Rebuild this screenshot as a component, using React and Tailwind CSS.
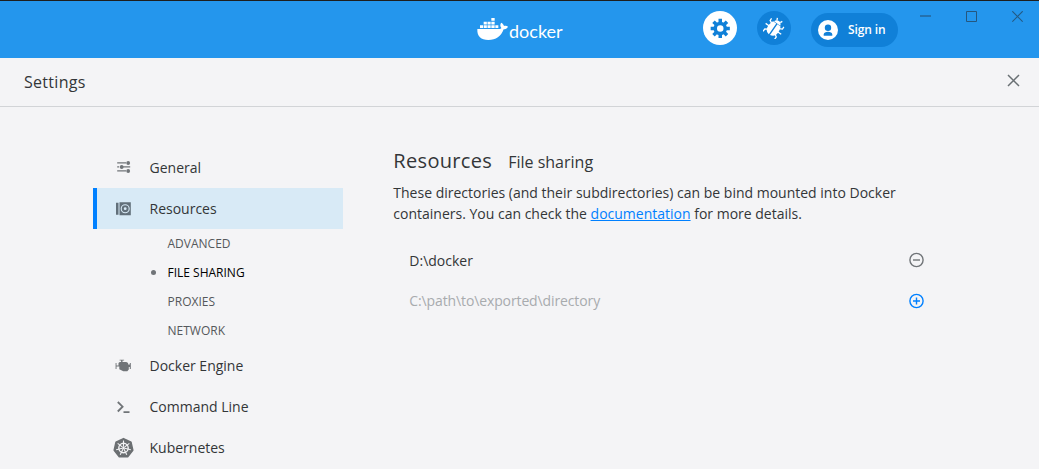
import React from "react";

function Whale() {
  return (
    <svg className="block h-6 w-8 shrink-0 fill-white" viewBox="50 51 96 72">
      <path d="M93 54h10v8.500h-10zM70 65h9.500v8.500h-9.500zM81.500 65h9.500v8.500h-9.500zM93 65h10v8.500h-10zM59 75.500h9v8.500h-9zM70 75.500h9.500v8.500h-9.500zM81.500 75.500h9.500v8.500h-9.500zM93 75.500h10v8.500h-10zM105 75.500h9v8.500h-9z" />
      <path d="M51 87H115C120 87 122 86 123 84C119 79 119 73 122.500 68C127 70 130 74 131 78C135 77 140 77 143 80C140 86 135 88 130 88C122 110 107 120 84 120C62 120 50 110 51 87Z" />
    </svg>
  );
}

function Gear() {
  return (
    <svg className="size-5" viewBox="0 0 24 24">
      <circle cx="12.300" cy="12.500" r="6" fill="none" stroke="#1080d8" strokeWidth="4.200" />
      <path stroke="#1080d8" strokeWidth="4.200" d="M12.300 1v4.500M12.300 19.500V24M.8 12.500h4.500M19.300 12.500h4.500M4.200 4.400l3.200 3.200M17.200 17.400l3.200 3.200M20.400 4.400l-3.200 3.200M7.400 17.400l-3.200 3.200" />
    </svg>
  );
}

function Bug() {
  return (
    <svg className="size-[22px]" viewBox="0 0 22 22" fill="none">
      <g transform="rotate(35 11 11)">
        <path fill="#fff" d="M7.200 5.500C7.800 3.300 9.200 2.500 11 2.500S14.200 3.300 14.800 5.500zM10.300 6v13C7.200 18.500 5 16.500 5 13c0-2.600.5-5.300 1.500-7zM11.700 6v13c3.100-.5 5.300-2.500 5.300-6 0-2.600-.5-5.300-1.500-7z" />
        <path stroke="#fff" strokeWidth="1.300" d="M6.500 8.500L3.500 7V4.500M6 12H1.500M6.500 15.500L4 17v3M15.500 8.500l3-1.500V4.500M16 12h4.500M15.500 15.500L18 17v3M9 3L8 .8M13 3l1-2.200" />
      </g>
    </svg>
  );
}

function Person() {
  return (
    <svg className="size-5 shrink-0" viewBox="0 0 20 20">
      <circle cx="10" cy="10" r="10" fill="#fff" />
      <circle cx="10" cy="7.700" r="3.200" fill="#1080d8" />
      <path fill="#1080d8" d="M5.700 15.800v-1.300c0-2 2-2.800 4.300-2.800s4.300.8 4.300 2.800v1.300z" />
    </svg>
  );
}

function Sliders() {
  return (
    <svg className="size-4 fill-[#707478]" viewBox="-0.7 0 16 16">
      <path d="M1.500 2.300h9v1.300h-9zM7 6.300h7.500v1.300H7zM1.500 6.300h2v1.300h-2zM1.500 10.300h9v1.300h-9z" />
      <circle cx="12.500" cy="3" r="1.900" /><circle cx="6" cy="7" r="1.900" /><circle cx="12.500" cy="11" r="1.900" />
    </svg>
  );
}

function Drive() {
  return (
    <svg className="size-4" viewBox="-0.5 0 16 16">
      <path fill="#62707a" d="M.5 1.800h2.500v12H.5zM4 1.300h11.300v13H4z" />
      <circle cx="9.700" cy="7.700" r="4" fill="none" stroke="#d8eaf6" strokeWidth="1.100" />
      <circle cx="9.700" cy="7.700" r="1.400" fill="#d8eaf6" />
    </svg>
  );
}

function Engine() {
  return (
    <svg className="size-4 fill-[#707478]" viewBox="-0.3 0 16 16">
      <path d="M4.300 1.800h4.500v.8H7.200V4H11l1.800 1v1.500h1.700V5h1v6h-1V9h-1v2.500L12 13.300H8L4 11.300V8.500H1.200V11h-.9V5h.9v2.500H3.200V5L4.500 4h1.300V2.600H4.300z" />
    </svg>
  );
}

function Prompt() {
  return (
    <svg className="size-4" viewBox="-0.5 0 16 16" fill="none" stroke="#707478" strokeWidth="1.800">
      <path d="M2.300 3L7.100 7.700l-4.800 4.800M8 13.200h6" />
    </svg>
  );
}

function Helm() {
  const spokes = [0, 1, 2, 3, 4, 5, 6];
  return (
    <svg className="size-[22px] shrink-0" viewBox="-0.5 0 22 22">
      <path fill="#6b6f72" stroke="#6b6f72" strokeWidth="1.500" strokeLinejoin="round" d="M11 1.600L18.500 5.200L20.300 13.200L15.200 19.800H6.800L1.700 13.200L3.500 5.200Z" />
      <circle cx="11" cy="11" r="4.700" fill="none" stroke="#f4f4f6" strokeWidth="1.400" />
      {spokes.map((n) => (
        <path key={n} d="M11 9.700V3.500" stroke="#f4f4f6" strokeWidth="1.100" transform={`rotate(${(n * 360) / 7} 11 11)`} />
      ))}
      <circle cx="11" cy="11" r="1.300" fill="#f4f4f6" />
    </svg>
  );
}

function NavItem({ icon, label, active }) {
  return (
    <a className={`flex h-[41px] items-center border-l-4 text-[14px] ${active ? "border-[#0080ff] bg-[#d8eaf6]" : "border-transparent"}`}>
      <span className="ml-[15px] flex w-[22px] shrink-0 justify-center">{icon}</span>
      <span className="ml-[15.500px]">{label}</span>
    </a>
  );
}

function SubItem({ label, active }) {
  return (
    <a className={`flex h-[29px] items-center pl-[58px] text-[12px] ${active ? "text-black" : "text-[#55585b]"}`}>
      <span className={`mr-[11.500px] size-[5px] rounded-full ${active ? "bg-[#707478]" : ""}`} />
      {label}
    </a>
  );
}

function CircleAction({ add }) {
  return (
    <svg className={`size-4 ${add ? "mt-px stroke-[#0080ff]" : "stroke-[#707478]"}`} viewBox="0 0 16 16" fill="none" strokeWidth="1.400">
      <circle cx="8.500" cy="8" r="6.600" />
      <path d={add ? "M5 8h7M8.500 4.500v7" : "M5 8h7"} />
    </svg>
  );
}

export default function App() {
  return (
    <div className="flex h-[469px] w-[1039px] flex-col overflow-hidden bg-[#f4f4f6] font-['Open_Sans',sans-serif] text-[#333638]">
      <div className="h-px shrink-0 bg-[#1e1e1e]" />
      <header className="flex h-[57px] shrink-0 bg-[#2496ed]">
        <div className="flex h-full w-[703px] items-start pl-[477px] pt-4">
          <Whale />
          <span className="mt-[3px] font-['Lato',sans-serif] text-[18px] leading-[22px] text-white">docker</span>
        </div>
        <div className="flex items-start pt-[10px] text-white">
          <span className="flex size-[34px] items-center justify-center rounded-full bg-white"><Gear /></span>
          <span className="ml-5 flex size-[34px] items-center justify-center rounded-full bg-[#1080d8]"><Bug /></span>
          <span className="ml-5 mt-[2px] flex h-[34px] w-[87px] items-center rounded-full bg-[#1080d8] pl-[7px] text-[12px] font-semibold">
            <Person />
            <span className="ml-[10px] whitespace-nowrap tracking-[-0.1px]">Sign in</span>
          </span>
        </div>
        <div className="ml-auto flex gap-[35px] pr-4 pt-[10px]">
          <svg className="h-3 w-[11px]" viewBox="0 0 11 12" stroke="#2471ae" strokeWidth="2"><path d="M0 5h11" /></svg>
          <svg className="h-3 w-[11px]" viewBox="0 0 11 12" fill="none" stroke="#24577f"><path d="M.5.5h10v10H.5z" /></svg>
          <svg className="h-3 w-[11px]" viewBox="0 0 11 12" stroke="#245a84" strokeWidth="1.200"><path d="M.3.3l10.400 10.400M10.700.3L.3 10.700" /></svg>
        </div>
      </header>
      <div className="flex h-[49px] shrink-0 items-center justify-between border-b border-[#d2d4d7] pl-6 pr-5">
        <h1 className="text-[16px] font-medium tracking-[0.3px]">Settings</h1>
        <svg className="mb-[3px] size-3" viewBox="-0.5 0.5 12 12" overflow="visible" stroke="#6a7074" strokeWidth="1.500"><path d="M.5.5l11 11M11.500.5l-11 11" /></svg>
      </div>
      <div className="flex">
        <nav className="ml-[93px] mt-10 w-[250px] shrink-0">
          <NavItem icon={<Sliders />} label="General" />
          <NavItem icon={<Drive />} label="Resources" active />
          <SubItem label="ADVANCED" />
          <SubItem label="FILE SHARING" active />
          <SubItem label="PROXIES" />
          <SubItem label="NETWORK" />
          <NavItem icon={<Engine />} label="Docker Engine" />
          <NavItem icon={<Prompt />} label="Command Line" />
          <NavItem icon={<Helm />} label="Kubernetes" />
        </nav>
        <main className="ml-[50.300px] mt-10 w-[540px]">
          <div className="flex items-baseline leading-[27px]">
            <h2 className="text-[20px] tracking-[0.33px]">Resources</h2>
            <span className="ml-4 text-[16px]">File sharing</span>
          </div>
          <p className="mt-[6px] text-[14px] leading-[21px]">
            These directories (and their subdirectories) can be bind mounted into Docker
            <br />
            containers. You can check the <a className="text-[#0080ff] underline">documentation</a> for more details.
          </p>
          <div className="mt-4 text-[14px]">
            <div className="flex h-10 items-center justify-between pl-4 pr-[9.300px]"><span>D:\docker</span><CircleAction /></div>
            <div className="flex h-10 items-center justify-between pl-4 pr-[9.300px]"><span className="tracking-[-0.12px] text-[#a8abae]">C:\path\to\exported\directory</span><CircleAction add /></div>
          </div>
        </main>
      </div>
    </div>
  );
}
